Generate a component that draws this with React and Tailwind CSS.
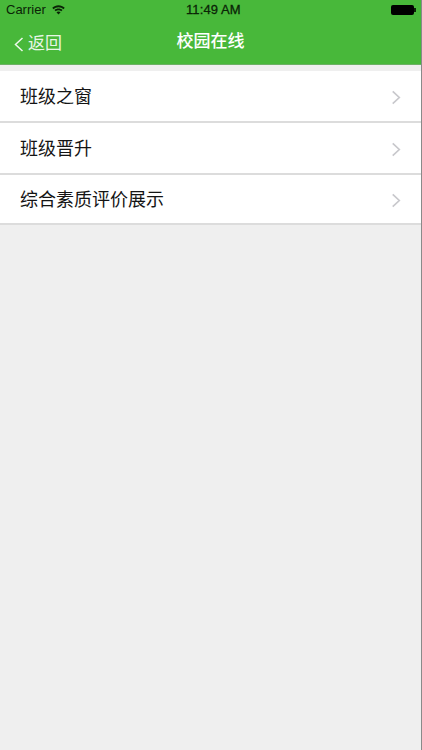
import React from 'react';

const CJK = "font-['Liberation_Sans','Noto_Sans_CJK_SC',sans-serif]";

const rows = [
  { label: '班级之窗', height: 'h-[52px]' },
  { label: '班级晋升', height: 'h-[52px]' },
  { label: '综合素质评价展示', height: 'h-[50px]' },
];

const Chevron = ({ className, color, width = 1.8 }) => (
  <svg className={className} viewBox="0 0 10 16" fill="none">
    <path d="M1.5 1.5 L8.5 8 L1.5 14.5" stroke={color} strokeWidth={width} />
  </svg>
);

const App = () => {
  return (
    <div className={`flex h-[750px] w-[422px] flex-col overflow-hidden border-r border-r-[#8a8a8a] bg-[#efefef] ${CJK}`}>
      {/* 状态栏 + 导航栏 */}
      <div className="h-[65px] shrink-0 border-b border-b-[#6cb064] bg-[#48b83a]">
        <div className="relative flex h-[20px] items-center justify-between pl-[6px] pr-[5px] text-[13px] text-[#0a2406]">
          <div className="flex items-center gap-[6px]">
            <span>Carrier</span>
            <svg className="h-[10px] w-[13px]" viewBox="0 0 14 10" fill="#0a2406">
              <path d="M7 0C4.4 0 2.2 1 .3 2.7l1.3 1.4C3 2.8 4.9 2 7 2s4 .8 5.4 2.1l1.3-1.4C11.8 1 9.6 0 7 0z" />
              <path d="M7 3.4c-1.7 0-3.2.6-4.3 1.6L4 6.4C4.8 5.7 5.8 5.3 7 5.3s2.2.4 3 1.1L11.3 5C10.2 4 8.7 3.4 7 3.4z" />
              <path d="M7 6.5c-.9 0-1.6.3-2.2.8L7 9.8l2.2-2.500c-.6-.5-1.300-.8-2.200-.8z" />
            </svg>
          </div>
          <span className="absolute left-[186px] tracking-[0.1px] [-webkit-text-stroke:0.3px_#0a2406]">11:49 AM</span>
          <div className="flex items-center">
            <div className="h-[10px] w-[23px] rounded-[2px] bg-black" />
            <div className="h-[4px] w-[2px] bg-[#0a2406]" />
          </div>
        </div>
        <div className="relative flex h-[44px] items-center justify-center text-white">
          <div className="absolute left-[14px] top-[14px] flex items-center gap-[4px]">
            <Chevron className="h-[17px] w-[10px] scale-x-[-1]" color="#eef8ec" width={1.5} />
            <span className="text-[17px] leading-[20px] text-[#e8f6e6]">返回</span>
          </div>
          <span className="text-[17px] font-medium leading-[20px]">校园在线</span>
        </div>
      </div>

      {/* 列表 */}
      <div className="mt-[6px] bg-white">
        {rows.map((row) => (
          <div
            key={row.label}
            className={`flex ${row.height} items-center justify-between border-b-2 border-b-[#dcdcdc] px-[20px] pt-[2px]`}
          >
            <span className="text-[18px] text-[#141414]">{row.label}</span>
            <Chevron className="h-[15px] w-[10px]" color="#c8c8cc" />
          </div>
        ))}
      </div>
    </div>
  );
};

export default App;
